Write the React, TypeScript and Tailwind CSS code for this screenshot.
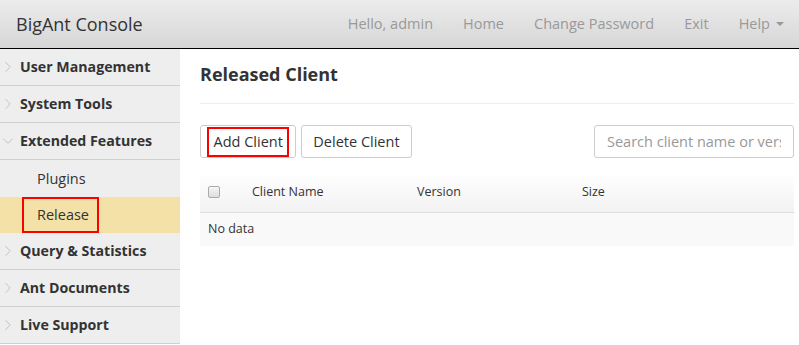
import { ChevronRight, ChevronDown } from 'lucide-react';

const font = { fontFamily: '"Open Sans", "Noto Sans", sans-serif' };

function NavBar() {
  return (
    <header className="flex h-[49px] items-center justify-between border-b border-black bg-gradient-to-b from-[#ececec] to-[#d6d6d6] pl-[16px] pr-[15px]">
      <span className="text-[18px] text-[#333]">BigAnt Console</span>
      <nav className="flex items-center gap-[30px] text-[14.5px] text-[#999]">
        <span>Hello, admin</span>
        <span>Home</span>
        <span>Change Password</span>
        <span>Exit</span>
        <span className="flex items-center gap-[6px]">
          Help
          <span className="h-0 w-0 border-x-[4px] border-t-[4px] border-x-transparent border-t-[#999]" />
        </span>
      </nav>
    </header>
  );
}

function MenuItem({ label, open }: { label: string; open?: boolean }) {
  return (
    <div className="flex h-[37px] items-center border-b border-[#d0d0d0]">
      {open ? (
        <ChevronDown className="-ml-[1px] h-[18px] w-[18px] text-[#c0c0c0]" strokeWidth={1.3} />
      ) : (
        <ChevronRight className="-ml-[1px] h-[18px] w-[18px] text-[#c0c0c0]" strokeWidth={1.3} />
      )}
      <span className="ml-[3px] text-[14.2px] font-bold text-[#333]">{label}</span>
    </div>
  );
}

function Sidebar() {
  return (
    <aside className="w-[180px] shrink-0 bg-[#eeeeee]">
      <MenuItem label="User Management" />
      <MenuItem label="System Tools" />
      <MenuItem label="Extended Features" open />
      <div className="flex h-[37px] items-center pl-[37px] text-[14.5px] text-[#333]">Plugins</div>
      <div className="flex h-[36px] items-center bg-[#f3e1a8] pl-[22px]">
        <span className="flex h-[36px] items-center border-2 border-[#f00] pl-[13px] pr-[8px] text-[14.5px] text-[#333]">
          Release
        </span>
      </div>
      <MenuItem label="Query & Statistics" />
      <MenuItem label="Ant Documents" />
      <MenuItem label="Live Support" />
    </aside>
  );
}

export default function App() {
  return (
    <div className="h-[345px] w-[799px] overflow-hidden bg-white" style={font}>
      <NavBar />
      <div className="flex">
        <Sidebar />
        <main className="flex-1 pl-[20px] pr-[5px]">
          <h1 className="mt-[12px] text-[18px] font-bold text-[#333]">Released Client</h1>
          <div className="mt-[15px] border-t border-[#eee]" />
          <div className="mt-[21px] flex items-center justify-between">
            <div className="flex gap-[5px]">
              <button className="flex h-[33px] items-center rounded-[3px] border border-[#ccc] bg-white pl-[6px] pr-[6px]">
                <span className="border-2 border-[#f00] px-[4.5px] text-[14.5px] leading-[26px] text-[#333]">Add Client</span>
              </button>
              <button className="h-[33px] rounded-[3px] border border-[#ccc] bg-white px-[11px] text-[14.5px] text-[#333]">
                Delete Client
              </button>
            </div>
            <input
              className="h-[33px] w-[200px] rounded-[3px] border border-[#ccc] px-[12px] text-[14.5px] text-[#333] placeholder:text-[#999] outline-none"
              placeholder="Search client name or version"
            />
          </div>
          <div className="mt-[14px]">
            <div className="flex h-[41px] items-center border-b border-[#ddd] bg-gradient-to-b from-white to-[#f2f2f2] text-[12.5px] text-[#333]">
              <div className="w-[52px] pl-[8px]">
                <span className="block h-[12px] w-[12px] rounded-[2px] border border-[#aaa] bg-gradient-to-b from-[#f6f6f6] to-[#ddd]" />
              </div>
              <div className="w-[165px]">Client Name</div>
              <div className="w-[165px]">Version</div>
              <div>Size</div>
            </div>
            <div className="flex h-[33px] items-center bg-[#f9f9f9] pl-[8px] text-[12.5px] text-[#333]">No data</div>
          </div>
        </main>
      </div>
    </div>
  );
}
